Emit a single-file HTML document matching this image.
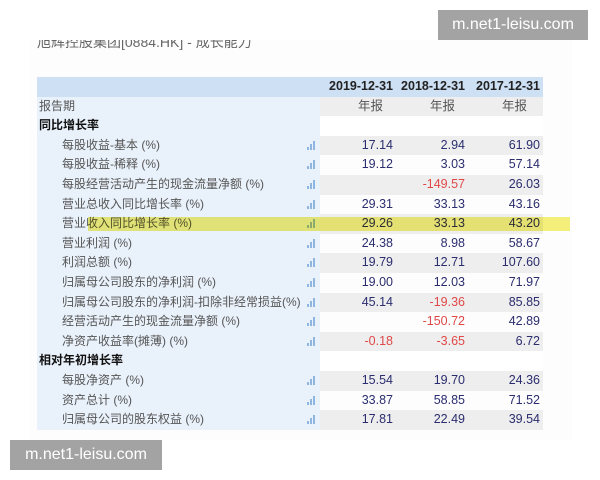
<!DOCTYPE html>
<html><head><meta charset="utf-8"><style>
*{margin:0;padding:0;box-sizing:border-box}
body{width:600px;height:480px;background:#fff;position:relative;overflow:hidden;font-family:"Liberation Sans","Noto Sans CJK SC",sans-serif}
.panel{position:absolute;left:30px;top:40px;width:542px;height:400px;background:#fdfdfe;overflow:hidden}
.title{position:absolute;left:7px;top:-8px;font-size:14px;color:#666}
.row{position:absolute;left:37px;width:506px;height:19.6px;font-size:12px;line-height:19.6px}
.lab{position:absolute;left:0;top:0;width:283px;height:100%;background:#e9f1fa;color:#555;padding-left:25px;white-space:nowrap}
.sec .lab{padding-left:2px;color:#111;font-weight:bold}
.num{position:absolute;top:0;left:283px;width:223px;height:100%}
.g .num{background:#eeeeee}
.num span{position:absolute;color:#2b2d6e;font-size:12.5px}
.num span.r{color:#e04848}
.a{right:150px}.b{right:78px}.c{right:3px}
.ic{position:absolute;left:270px;top:5px;width:9px;height:9px}
.ic i{position:absolute;bottom:0;width:2px;background:#8fb6e0}
.wm{position:absolute;background:#a3a3a3;color:#fff;font-size:16px;line-height:30px;text-align:center}
</style></head><body>
<div class="panel"><div class="title">旭辉控股集团[0884.HK] - 成长能力</div></div>
<div class="row" style="top:77px;background:#cde0f4;font-weight:bold;font-size:12.5px;color:#222"><div class="num"><span class="a" style="color:#222">2019-12-31</span><span class="b" style="color:#222">2018-12-31</span><span class="c" style="color:#222">2017-12-31</span></div></div>
<div class="row g" style="top:96.6px"><div class="lab" style="padding-left:2px">报告期</div><div class="num"><span class="a" style="color:#555;right:160px">年报</span><span class="b" style="color:#555;right:88px">年报</span><span class="c" style="color:#555;right:16px">年报</span></div></div>
<div class="row sec" style="top:116.2px"><div class="lab">同比增长率</div><div class="num" style="background:#fff"></div></div>
<div id="rows"></div>
<div style="position:absolute;left:88px;top:217px;width:482px;height:14px;background:#f6f07a;mix-blend-mode:multiply"></div>
<div class="wm" style="left:438px;top:10px;width:150px">m.net1-leisu.com</div>
<div class="wm" style="left:10px;top:440px;width:152px">m.net1-leisu.com</div>
<script>
var d=[["每股收益-基本 (%)","17.14","2.94","61.90"],["每股收益-稀释 (%)","19.12","3.03","57.14"],["每股经营活动产生的现金流量净额 (%)","","-149.57","26.03"],["营业总收入同比增长率 (%)","29.31","33.13","43.16"],["营业收入同比增长率 (%)","29.26","33.13","43.20"],["营业利润 (%)","24.38","8.98","58.67"],["利润总额 (%)","19.79","12.71","107.60"],["归属母公司股东的净利润 (%)","19.00","12.03","71.97"],["归属母公司股东的净利润-扣除非经常损益(%)","45.14","-19.36","85.85"],["经营活动产生的现金流量净额 (%)","","-150.72","42.89"],["净资产收益率(摊薄) (%)","-0.18","-3.65","6.72"],["相对年初增长率"],["每股净资产 (%)","15.54","19.70","24.36"],["资产总计 (%)","33.87","58.85","71.52"],["归属母公司的股东权益 (%)","17.81","22.49","39.54"]];
var h="",y=135.8;
d.forEach(function(r,i){
 if(r.length==1){h+='<div class="row sec" style="top:'+y+'px"><div class="lab">'+r[0]+'</div><div class="num" style="background:#fff"></div></div>';}
 else{var g=(i<11?i%2==0:(i-12)%2==0);
 function s(v,c){return '<span class="'+c+(v.charAt(0)=="-"?' r':'')+'">'+v+'</span>'}
 h+='<div class="row'+(g?' g':'')+'" style="top:'+y+'px"><div class="lab">'+r[0]+'<div class="ic"><i style="left:0;height:3px"></i><i style="left:3px;height:6px"></i><i style="left:6px;height:9px"></i></div></div><div class="num">'+s(r[1],"a")+s(r[2],"b")+s(r[3],"c")+'</div></div>';}
 y+=19.6;});
document.getElementById("rows").innerHTML=h;
</script>
</body></html>
